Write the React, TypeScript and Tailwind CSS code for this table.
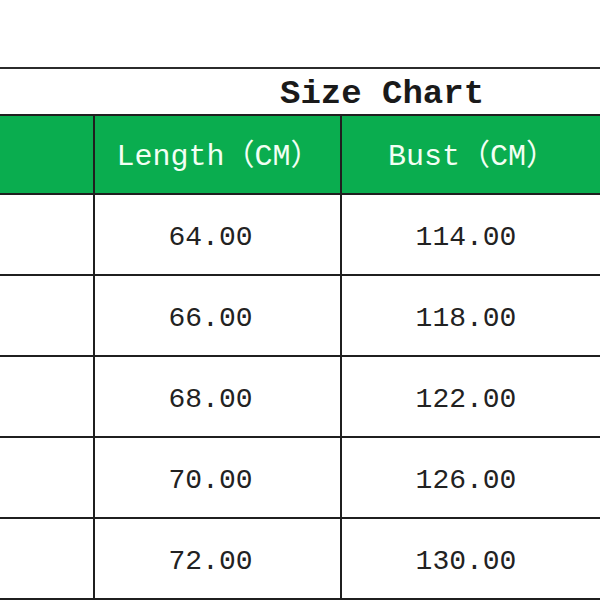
const rows = [
  { length: "64.00", bust: "114.00" },
  { length: "66.00", bust: "118.00" },
  { length: "68.00", bust: "122.00" },
  { length: "70.00", bust: "126.00" },
  { length: "72.00", bust: "130.00" },
];

const mono = "font-['Liberation_Mono','Noto_Sans_CJK_SC',monospace]";

export default function App() {
  return (
    <div className="w-[600px] h-[600px] overflow-hidden bg-white">
      <div className="mt-[67px] w-[640px] border-t-2 border-[#2b2b2b]">
        {/* title row */}
        <div className={`h-[45px] flex items-center pl-[280px] pt-[6px] text-[34px] font-bold text-[#1a1a1a] ${mono}`}>
          Size Chart
        </div>

        {/* header row */}
        <div className="flex h-[81px] bg-[#0aad4f] border-t-2 border-b-2 border-[#1f1f1f]">
          <div className="w-[93px] shrink-0" />
          <div className={`w-[247px] shrink-0 border-l-2 border-[#1f1f1f] flex items-center justify-center pl-[2px] pt-[6px] text-[30px] text-[#f2fff4] ${mono}`}>
            Length（CM）
          </div>
          <div className={`w-[250px] shrink-0 border-l-2 border-[#1f1f1f] flex items-center justify-center pl-[12px] pt-[6px] text-[30px] text-[#f2fff4] ${mono}`}>
            Bust（CM）
          </div>
        </div>

        {/* data rows */}
        {rows.map((r) => (
          <div key={r.length} className="flex h-[81px] border-b-2 border-[#1f1f1f]">
            <div className="w-[93px] shrink-0" />
            <div className={`w-[247px] shrink-0 border-l-2 border-[#1f1f1f] flex items-center justify-center pr-[14px] pt-[6px] text-[28px] text-[#222] ${mono}`}>
              {r.length}
            </div>
            <div className={`w-[250px] shrink-0 border-l-2 border-[#1f1f1f] flex items-center justify-center pt-[6px] text-[28px] text-[#222] ${mono}`}>
              {r.bust}
            </div>
          </div>
        ))}
      </div>
    </div>
  );
}
